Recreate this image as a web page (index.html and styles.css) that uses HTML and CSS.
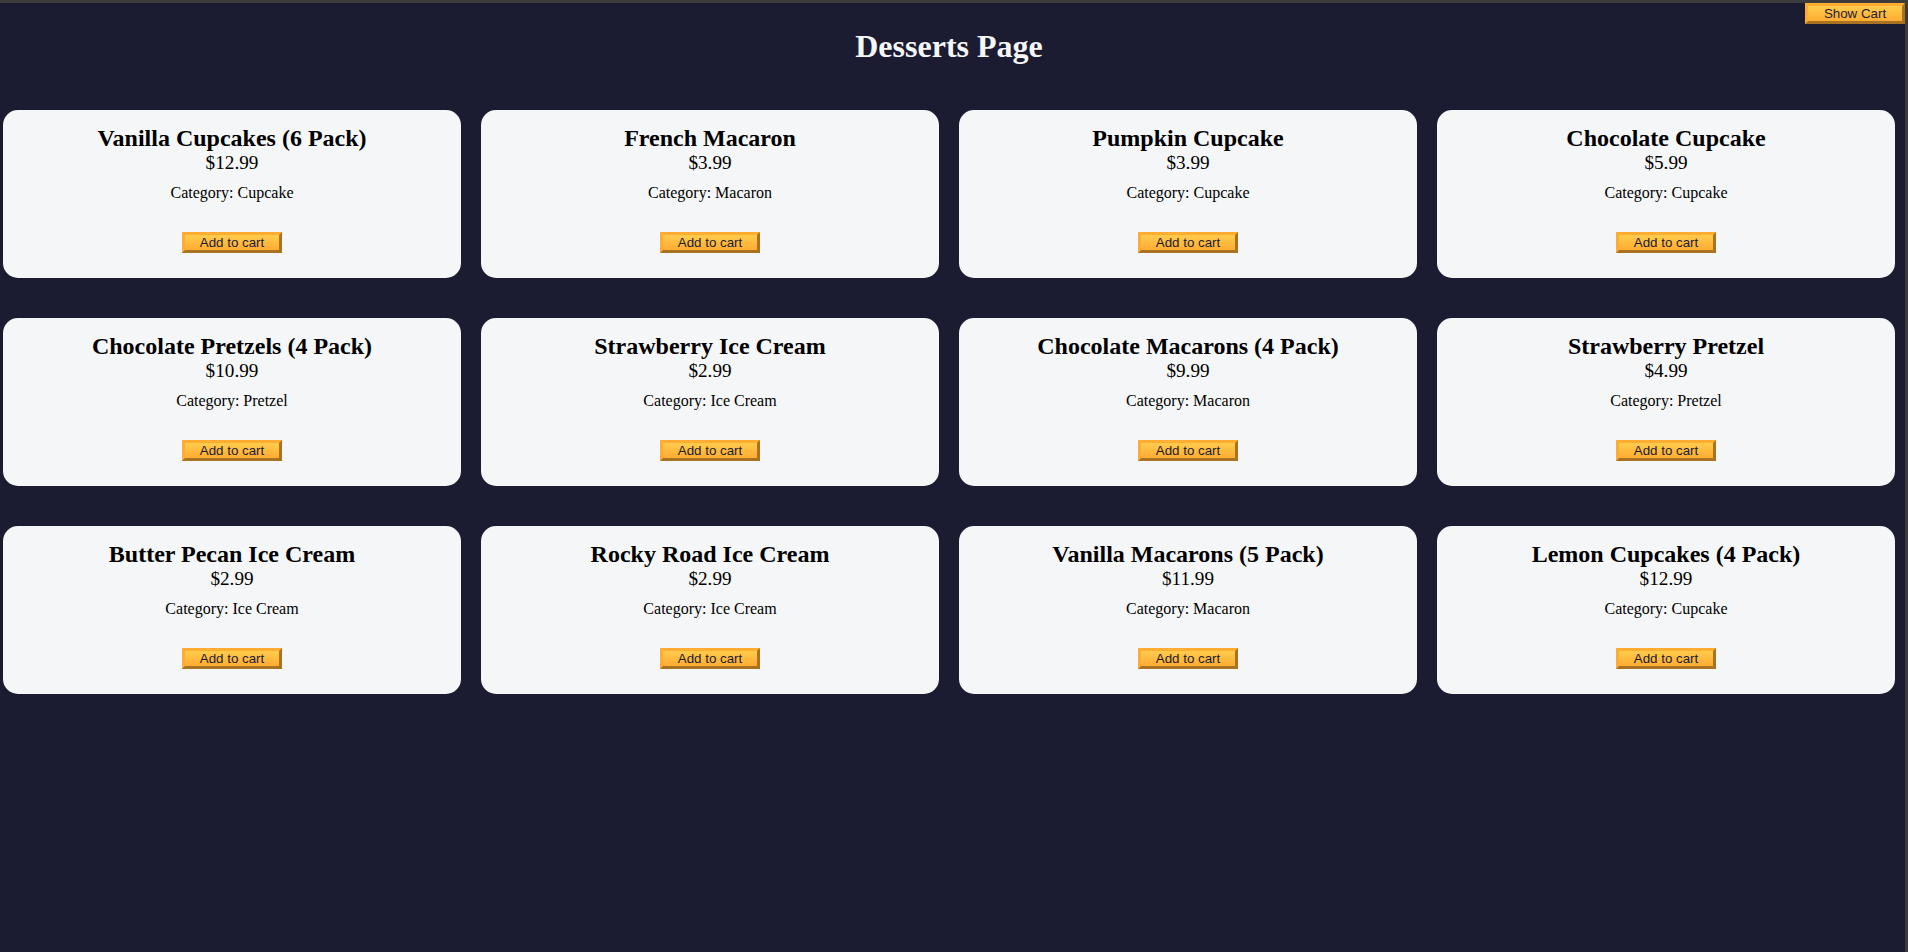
FILE: index.html
```html
<!DOCTYPE html>
<html lang="en">
<head>
<meta charset="utf-8">
<title>Desserts Page</title>
<link rel="stylesheet" href="styles.css">
</head>
<body>
<div class="viewport">
  <button class="btn cart-btn">Show Cart</button>
  <div class="page">
    <h1 class="title">Desserts Page</h1>
    <div class="dessert-card-container">
      <div class="dessert-card"><h2>Vanilla Cupcakes (6 Pack)</h2><p class="dessert-price">$12.99</p><p class="product-category">Category: Cupcake</p><button class="btn add-to-cart-btn">Add to cart</button></div>
      <div class="dessert-card"><h2>French Macaron</h2><p class="dessert-price">$3.99</p><p class="product-category">Category: Macaron</p><button class="btn add-to-cart-btn">Add to cart</button></div>
      <div class="dessert-card"><h2>Pumpkin Cupcake</h2><p class="dessert-price">$3.99</p><p class="product-category">Category: Cupcake</p><button class="btn add-to-cart-btn">Add to cart</button></div>
      <div class="dessert-card"><h2>Chocolate Cupcake</h2><p class="dessert-price">$5.99</p><p class="product-category">Category: Cupcake</p><button class="btn add-to-cart-btn">Add to cart</button></div>
      <div class="dessert-card"><h2>Chocolate Pretzels (4 Pack)</h2><p class="dessert-price">$10.99</p><p class="product-category">Category: Pretzel</p><button class="btn add-to-cart-btn">Add to cart</button></div>
      <div class="dessert-card"><h2>Strawberry Ice Cream</h2><p class="dessert-price">$2.99</p><p class="product-category">Category: Ice Cream</p><button class="btn add-to-cart-btn">Add to cart</button></div>
      <div class="dessert-card"><h2>Chocolate Macarons (4 Pack)</h2><p class="dessert-price">$9.99</p><p class="product-category">Category: Macaron</p><button class="btn add-to-cart-btn">Add to cart</button></div>
      <div class="dessert-card"><h2>Strawberry Pretzel</h2><p class="dessert-price">$4.99</p><p class="product-category">Category: Pretzel</p><button class="btn add-to-cart-btn">Add to cart</button></div>
      <div class="dessert-card"><h2>Butter Pecan Ice Cream</h2><p class="dessert-price">$2.99</p><p class="product-category">Category: Ice Cream</p><button class="btn add-to-cart-btn">Add to cart</button></div>
      <div class="dessert-card"><h2>Rocky Road Ice Cream</h2><p class="dessert-price">$2.99</p><p class="product-category">Category: Ice Cream</p><button class="btn add-to-cart-btn">Add to cart</button></div>
      <div class="dessert-card"><h2>Vanilla Macarons (5 Pack)</h2><p class="dessert-price">$11.99</p><p class="product-category">Category: Macaron</p><button class="btn add-to-cart-btn">Add to cart</button></div>
      <div class="dessert-card"><h2>Lemon Cupcakes (4 Pack)</h2><p class="dessert-price">$12.99</p><p class="product-category">Category: Cupcake</p><button class="btn add-to-cart-btn">Add to cart</button></div>
    </div>
  </div>
</div>
</body>
</html>
```
FILE: styles.css
```css
*, *::before, *::after {
  margin: 0;
  padding: 0;
  box-sizing: border-box;
}

html, body {
  height: 100%;
}

body {
  background-color: #3c3c3c;
  font-family: "Liberation Serif", "Times New Roman", serif;
  overflow: hidden;
}

.viewport {
  position: relative;
  margin: 3px 3px 0 0;
  height: 949px;
  background-color: #1b1b32;
  overflow: hidden;
}

.page {
  margin-left: -7px;
}

.title {
  color: #f5f6f7;
  text-align: center;
  margin: 25px 0;
  font-size: 32px;
  font-weight: bold;
  line-height: normal;
}

.dessert-card-container {
  display: flex;
  flex-wrap: wrap;
  justify-content: space-evenly;
}

.dessert-card {
  background-color: #f5f6f7;
  padding: 15px;
  text-align: center;
  border-radius: 15px;
  margin: 20px 10px;
  flex: 0 0 458px;
}

.dessert-card h2 {
  font-size: 24px;
  font-weight: bold;
}

.dessert-price {
  font-size: 19.2px;
}

.product-category {
  margin: 10px 0;
  font-size: 16px;
}

.btn {
  display: block;
  cursor: pointer;
  width: 100px;
  height: 21px;
  font-family: "Liberation Sans", Arial, sans-serif;
  font-size: 13.333px;
  line-height: 15px;
  color: #1b1b32;
  background-color: #feac32;
  background-image: linear-gradient(#fecc4c, #ffac33);
  border: 3px outset #feac32;
  padding: 0 6px;
}

.add-to-cart-btn {
  margin: 30px auto 10px;
}

.cart-btn {
  position: absolute;
  top: 0;
  right: 0;
}
```
